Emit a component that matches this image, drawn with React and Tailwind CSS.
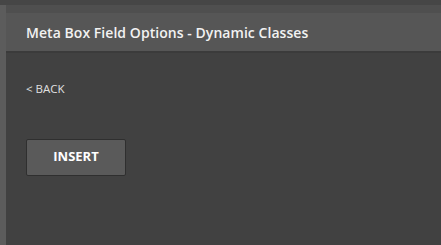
export default function App() {
  return (
    <div className="w-[441px] h-[245px] flex flex-col bg-[#414141] overflow-hidden" style={{ fontFamily: '"Open Sans", "Noto Sans", sans-serif' }}>
      <div className="h-[5px] bg-[#464646]" />
      <div className="flex flex-1">
        <div className="w-[6px] bg-[#5c5c5c]" />
        <div className="flex-1 flex flex-col">
          <div className="h-[8px] bg-[#4f4f4f]" />
          <div className="h-[38px] bg-[#565656] flex items-center pl-[20px]">
            <h1 className="text-[14px] font-semibold text-[#f2f2f2] tracking-[0.05px]">Meta Box Field Options - Dynamic Classes</h1>
          </div>
          <div className="h-[2px] bg-[#3b3b3b]" />
          <div className="flex-1 flex flex-col items-start pl-[20px] pt-[30px]">
            <button className="text-[11.5px] text-[#e0e0e0] leading-none">&lt; BACK</button>
            <button className="mt-[44px] w-[100px] h-[37px] bg-[#5a5a5a] border border-[#2f2f2f] rounded-[2px] text-[13px] font-bold text-white">
              INSERT
            </button>
          </div>
        </div>
      </div>
    </div>
  );
}
